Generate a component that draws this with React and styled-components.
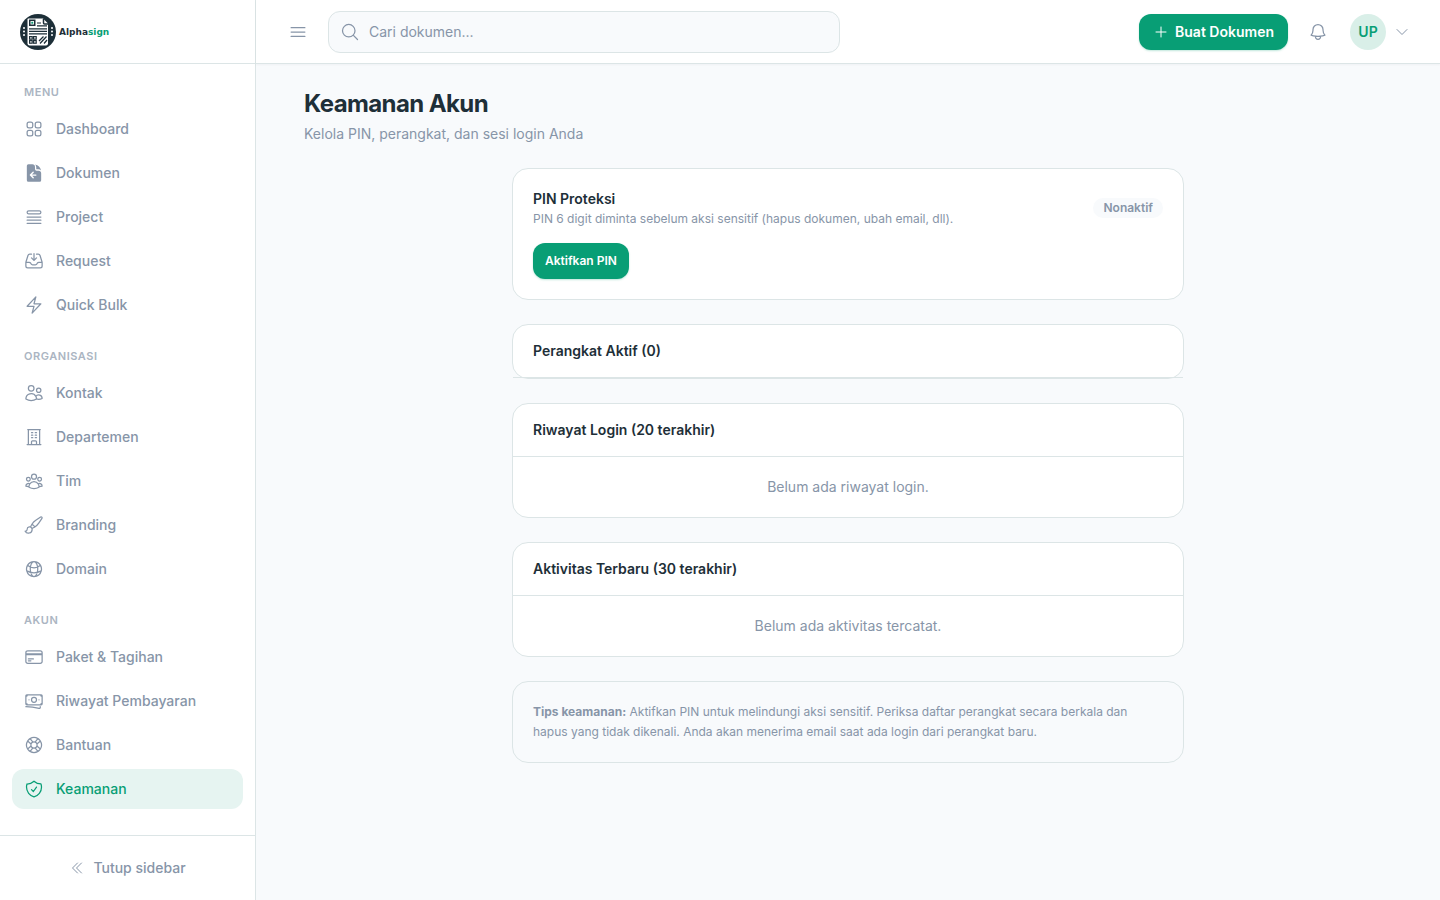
import React from 'react'
import styled, { createGlobalStyle } from 'styled-components'

// heroicons
import {
  HiOutlineSquares2X2,
  HiOutlineQueueList,
  HiOutlineInboxArrowDown,
  HiOutlineBolt,
  HiOutlineUsers,
  HiOutlineBuildingOffice,
  HiOutlineUserGroup,
  HiOutlinePaintBrush,
  HiOutlineGlobeAlt,
  HiOutlineCreditCard,
  HiOutlineBanknotes,
  HiOutlineLifebuoy,
  HiOutlineShieldCheck,
  HiOutlineChevronDoubleLeft,
  HiOutlineChevronDown,
  HiOutlineBars3,
  HiOutlineMagnifyingGlass,
  HiOutlineBell,
  HiOutlinePlus
} from 'react-icons/hi2'

const colors = {
  ink: '#1e2f38',
  muted: '#8795a8',
  faint: '#abb5c2',
  line: '#dce5e6',
  page: '#f8fafc',
  green: '#089e75',
  greenSoft: '#e6f4f1',
  greenPale: '#d9efe8'
}

const GlobalStyle = createGlobalStyle`
  *, *::before, *::after {
    box-sizing: border-box;
  }

  body {
    margin: 0;
    background: ${colors.page};
    color: ${colors.ink};
    font-family: Inter, sans-serif;
    font-size: 14px;
    line-height: 20px;
    -webkit-font-smoothing: antialiased;
  }

  h1, h2, p, ul {
    margin: 0;
    padding: 0;
  }

  button, input {
    font: inherit;
  }

  button {
    border: 0;
    padding: 0;
    background: none;
    cursor: pointer;
  }

  svg {
    flex-shrink: 0;
  }
`

const Layout = styled.div`
  display: flex;
  min-height: 100vh;
`

const Sidebar = styled.aside`
  width: 256px;
  flex-shrink: 0;
  display: flex;
  flex-direction: column;
  background: #fff;
  border-right: 1px solid ${colors.line};
`

const Brand = styled.a`
  height: 64px;
  padding: 0 20px;
  display: flex;
  align-items: center;
  gap: 3px;
  border-bottom: 1px solid ${colors.line};
  color: ${colors.ink};
  font-family: 'DejaVu Sans', sans-serif;
  font-size: 9px;
  font-weight: 700;
  text-decoration: none;

  em {
    font-style: normal;
    color: ${colors.green};
  }
`

const Nav = styled.nav`
  flex: 1;
  padding: 20px 12px;
  display: flex;
  flex-direction: column;
  gap: 23px;
`

const NavLabel = styled.p`
  padding: 0 12px;
  margin-bottom: 8px;
  color: ${colors.faint};
  font-size: 11px;
  font-weight: 600;
  line-height: 17px;
  letter-spacing: 0.05em;
  text-transform: uppercase;
`

const NavList = styled.ul`
  display: flex;
  flex-direction: column;
  gap: 4px;
  list-style: none;
`

const NavLink = styled.a`
  height: 40px;
  padding: 0 12px;
  display: flex;
  align-items: center;
  gap: 12px;
  border-radius: 12px;
  background: ${({ $active }) => ($active ? colors.greenSoft : 'transparent')};
  color: ${({ $active }) => ($active ? colors.green : colors.muted)};
  font-weight: 500;
  text-decoration: none;
`

const SidebarFooter = styled.div`
  height: 65px;
  display: flex;
  align-items: center;
  justify-content: center;
  border-top: 1px solid ${colors.line};
`

const CollapseButton = styled.button`
  display: flex;
  align-items: center;
  gap: 8px;
  color: ${colors.muted};
  font-weight: 500;
`

const Content = styled.div`
  flex: 1;
  min-width: 0;
`

const Header = styled.header`
  height: 64px;
  padding: 0 24px;
  display: flex;
  align-items: center;
  gap: 12px;
  background: #fff;
  border-bottom: 1px solid ${colors.line};
  box-shadow: 0 1px 2px rgba(15, 23, 42, 0.04);
`

const IconButton = styled.button`
  width: 36px;
  height: 36px;
  display: flex;
  align-items: center;
  justify-content: center;
  color: ${colors.muted};
`

const SearchBox = styled.label`
  flex: 1;
  max-width: 512px;
  height: 42px;
  padding: 0 11px;
  display: flex;
  align-items: center;
  gap: 9px;
  background: ${colors.page};
  border: 1px solid ${colors.line};
  border-radius: 12px;
  color: ${colors.muted};

  input {
    flex: 1;
    min-width: 0;
    padding: 0;
    border: 0;
    outline: none;
    background: transparent;
    color: ${colors.ink};
  }

  input::placeholder {
    color: ${colors.muted};
    opacity: 1;
  }
`

const HeaderActions = styled.div`
  margin-left: auto;
  display: flex;
  align-items: center;
  gap: 12px;
`

const PrimaryButton = styled.button`
  height: 36px;
  padding: ${({ $small }) => ($small ? '0 12px' : '0 14px')};
  display: inline-flex;
  align-items: center;
  gap: 6px;
  border-radius: 12px;
  background: ${colors.green};
  box-shadow: 0 1px 2px rgba(8, 158, 117, 0.25);
  color: #fff;
  font-size: ${({ $small }) => ($small ? '12px' : '14px')};
  font-weight: 600;
`

const UserButton = styled.button`
  padding: 0 6px 0 2px;
  display: flex;
  align-items: center;
  gap: 8px;
  color: ${colors.muted};
`

const Avatar = styled.span`
  width: 36px;
  height: 36px;
  display: flex;
  align-items: center;
  justify-content: center;
  border-radius: 50%;
  background: ${colors.greenPale};
  color: ${colors.green};
  font-weight: 600;
`

const Main = styled.main`
  padding: 24px 48px;
`

const PageTitle = styled.h1`
  font-size: 24px;
  font-weight: 700;
  line-height: 32px;
  letter-spacing: -0.025em;
`

const PageSubtitle = styled.p`
  margin-top: 4px;
  color: ${colors.muted};
`

const Column = styled.div`
  max-width: 672px;
  margin: 24px auto 0;
  display: flex;
  flex-direction: column;
  gap: 24px;
`

const Card = styled.section`
  background: #fff;
  border: 1px solid ${colors.line};
  border-radius: 16px;
`

const PinCard = styled(Card)`
  padding: 20px;
`

const PinHeader = styled.div`
  margin-bottom: 16px;
  display: flex;
  align-items: center;
  justify-content: space-between;
  gap: 16px;
`

const CardTitle = styled.h2`
  font-size: 14px;
  font-weight: 600;
  line-height: 20px;
`

const CardText = styled.p`
  margin-top: 2px;
  color: ${colors.muted};
  font-size: 12px;
  line-height: 16px;
`

const Badge = styled.span`
  padding: 2px 10px;
  border-radius: 10px;
  background: ${colors.page};
  color: ${colors.muted};
  font-size: 12px;
  font-weight: 600;
  line-height: 16px;
`

const CardHeader = styled.div`
  padding: 16px 20px;
  border-bottom: 1px solid ${colors.line};
`

const EmptyText = styled.p`
  padding: 20px;
  color: ${colors.muted};
  text-align: center;
`

const TipsCard = styled(Card)`
  padding: 20px;
  background: ${colors.page};
  color: ${colors.muted};
  font-size: 12px;

  strong {
    font-weight: 700;
  }
`

const LogoMark = () => (
  <svg width="36" height="36" viewBox="0 0 36 36" aria-hidden="true">
    <circle cx="18" cy="18" r="18" fill="#1d2f38" />
    <path d="M8.500 4.500h14.500l5 5v20a2 2 0 0 1-2 2H9.500a2 2 0 0 1-2-2v-24a1 1 0 0 1 1-1z" fill="#fff" />
    <path d="M23.500 5v4a1 1 0 0 0 1 1H28" fill="none" stroke="#1d2f38" strokeWidth="1.500" />
    <rect x="9.750" y="6.250" width="5" height="5" fill="#fff" stroke="#1d2f38" strokeWidth="1.500" />
    <rect x="11.300" y="7.800" width="1.900" height="1.900" fill="#089e75" />
    <path d="M17 9h4M17 11.800h10M9 14.800h18M9 17.300h18M9 19.800h18" stroke="#1d2f38" strokeWidth="1.200" />
    <g fill="none" stroke="#1d2f38" strokeWidth="1.200">
      <rect x="9.600" y="22.600" width="2.600" height="2.600" />
      <rect x="13.600" y="22.600" width="2.600" height="2.600" />
      <rect x="9.600" y="26.600" width="2.600" height="2.600" />
      <rect x="13.600" y="26.600" width="2.600" height="2.600" />
    </g>
    <path d="M19 27l4.500-4.500M20 29.500l6.500-7M24 29.500l3-3.500" stroke="#1d2f38" strokeWidth="1.300" />
    <g fill="#fff">
      <circle cx="4" cy="14" r="1" />
      <circle cx="4" cy="17.500" r="1" />
      <circle cx="4" cy="21" r="1" />
      <circle cx="32" cy="14" r="1" />
      <circle cx="32" cy="17.500" r="1" />
      <circle cx="32" cy="21" r="1" />
    </g>
  </svg>
)

const DocumentIcon = ({ size }) => (
  <svg width={size} height={size} viewBox="0 0 24 24" fill="currentColor" aria-hidden="true">
    <path d="M5.250 1.500A1.900 1.900 0 0 0 3.400 3.400v17.200a1.900 1.900 0 0 0 1.850 1.900h13.500a1.900 1.900 0 0 0 1.850-1.900V12.400A3.200 3.200 0 0 0 17.400 9.200h-2.300a1.900 1.900 0 0 1-1.900-1.900V4.700A3.200 3.200 0 0 0 10 1.500H5.250Z" />
    <path d="M13.400 1.800c.8.900 1.300 2.100 1.300 3.400v1.900c0 .3.200.5.500.5h1.900c1.300 0 2.500.5 3.400 1.300a9.800 9.800 0 0 0-7.100-7.100Z" />
    <path d="M14.200 14.500H8m3-3.300-3.300 3.300 3.300 3.300" fill="none" stroke="#fff" strokeWidth="1.700" strokeLinecap="round" strokeLinejoin="round" />
  </svg>
)

const sections = [
  {
    label: 'Menu',
    items: [
      { name: 'Dashboard', icon: HiOutlineSquares2X2 },
      { name: 'Dokumen', icon: DocumentIcon },
      { name: 'Project', icon: HiOutlineQueueList },
      { name: 'Request', icon: HiOutlineInboxArrowDown },
      { name: 'Quick Bulk', icon: HiOutlineBolt }
    ]
  },
  {
    label: 'Organisasi',
    items: [
      { name: 'Kontak', icon: HiOutlineUsers },
      { name: 'Departemen', icon: HiOutlineBuildingOffice },
      { name: 'Tim', icon: HiOutlineUserGroup },
      { name: 'Branding', icon: HiOutlinePaintBrush },
      { name: 'Domain', icon: HiOutlineGlobeAlt }
    ]
  },
  {
    label: 'Akun',
    items: [
      { name: 'Paket & Tagihan', icon: HiOutlineCreditCard },
      { name: 'Riwayat Pembayaran', icon: HiOutlineBanknotes },
      { name: 'Bantuan', icon: HiOutlineLifebuoy },
      { name: 'Keamanan', icon: HiOutlineShieldCheck, active: true }
    ]
  }
]

const NavSection = ({ label, items }) => (
  <div>
    <NavLabel>{label}</NavLabel>
    <NavList>
      {items.map(({ name, icon: Icon, active }) => (
        <li key={name}>
          <NavLink href="#" $active={active} aria-current={active ? 'page' : undefined}>
            <Icon size={20} />
            {name}
          </NavLink>
        </li>
      ))}
    </NavList>
  </div>
)

const App = () => {
  return (
    <>
      <GlobalStyle />
      <Layout>
        <Sidebar>
          <Brand href="#">
            <LogoMark />
            <span>Alpha<em>sign</em></span>
          </Brand>
          <Nav>
            {sections.map(section => <NavSection key={section.label} {...section} />)}
          </Nav>
          <SidebarFooter>
            <CollapseButton type="button">
              <HiOutlineChevronDoubleLeft size={16} />
              Tutup sidebar
            </CollapseButton>
          </SidebarFooter>
        </Sidebar>

        <Content>
          <Header>
            <IconButton type="button" aria-label="Menu">
              <HiOutlineBars3 size={20} />
            </IconButton>
            <SearchBox>
              <HiOutlineMagnifyingGlass size={20} />
              <input type="search" placeholder="Cari dokumen..." aria-label="Cari dokumen" />
            </SearchBox>
            <HeaderActions>
              <PrimaryButton type="button">
                <HiOutlinePlus size={16} />
                Buat Dokumen
              </PrimaryButton>
              <IconButton type="button" aria-label="Notifikasi">
                <HiOutlineBell size={20} />
              </IconButton>
              <UserButton type="button">
                <Avatar>UP</Avatar>
                <HiOutlineChevronDown size={16} />
              </UserButton>
            </HeaderActions>
          </Header>

          <Main>
            <PageTitle>Keamanan Akun</PageTitle>
            <PageSubtitle>Kelola PIN, perangkat, dan sesi login Anda</PageSubtitle>

            <Column>
              <PinCard>
                <PinHeader>
                  <div>
                    <CardTitle>PIN Proteksi</CardTitle>
                    <CardText>PIN 6 digit diminta sebelum aksi sensitif (hapus dokumen, ubah email, dll).</CardText>
                  </div>
                  <Badge>Nonaktif</Badge>
                </PinHeader>
                <PrimaryButton type="button" $small>Aktifkan PIN</PrimaryButton>
              </PinCard>

              <Card>
                <CardHeader>
                  <CardTitle>Perangkat Aktif (0)</CardTitle>
                </CardHeader>
              </Card>

              <Card>
                <CardHeader>
                  <CardTitle>Riwayat Login (20 terakhir)</CardTitle>
                </CardHeader>
                <EmptyText>Belum ada riwayat login.</EmptyText>
              </Card>

              <Card>
                <CardHeader>
                  <CardTitle>Aktivitas Terbaru (30 terakhir)</CardTitle>
                </CardHeader>
                <EmptyText>Belum ada aktivitas tercatat.</EmptyText>
              </Card>

              <TipsCard>
                <p>
                  <strong>Tips keamanan:</strong> Aktifkan PIN untuk melindungi aksi sensitif. Periksa daftar perangkat secara berkala dan hapus yang tidak dikenali. Anda akan menerima email saat ada login dari perangkat baru.
                </p>
              </TipsCard>
            </Column>
          </Main>
        </Content>
      </Layout>
    </>
  )
}

export default App
